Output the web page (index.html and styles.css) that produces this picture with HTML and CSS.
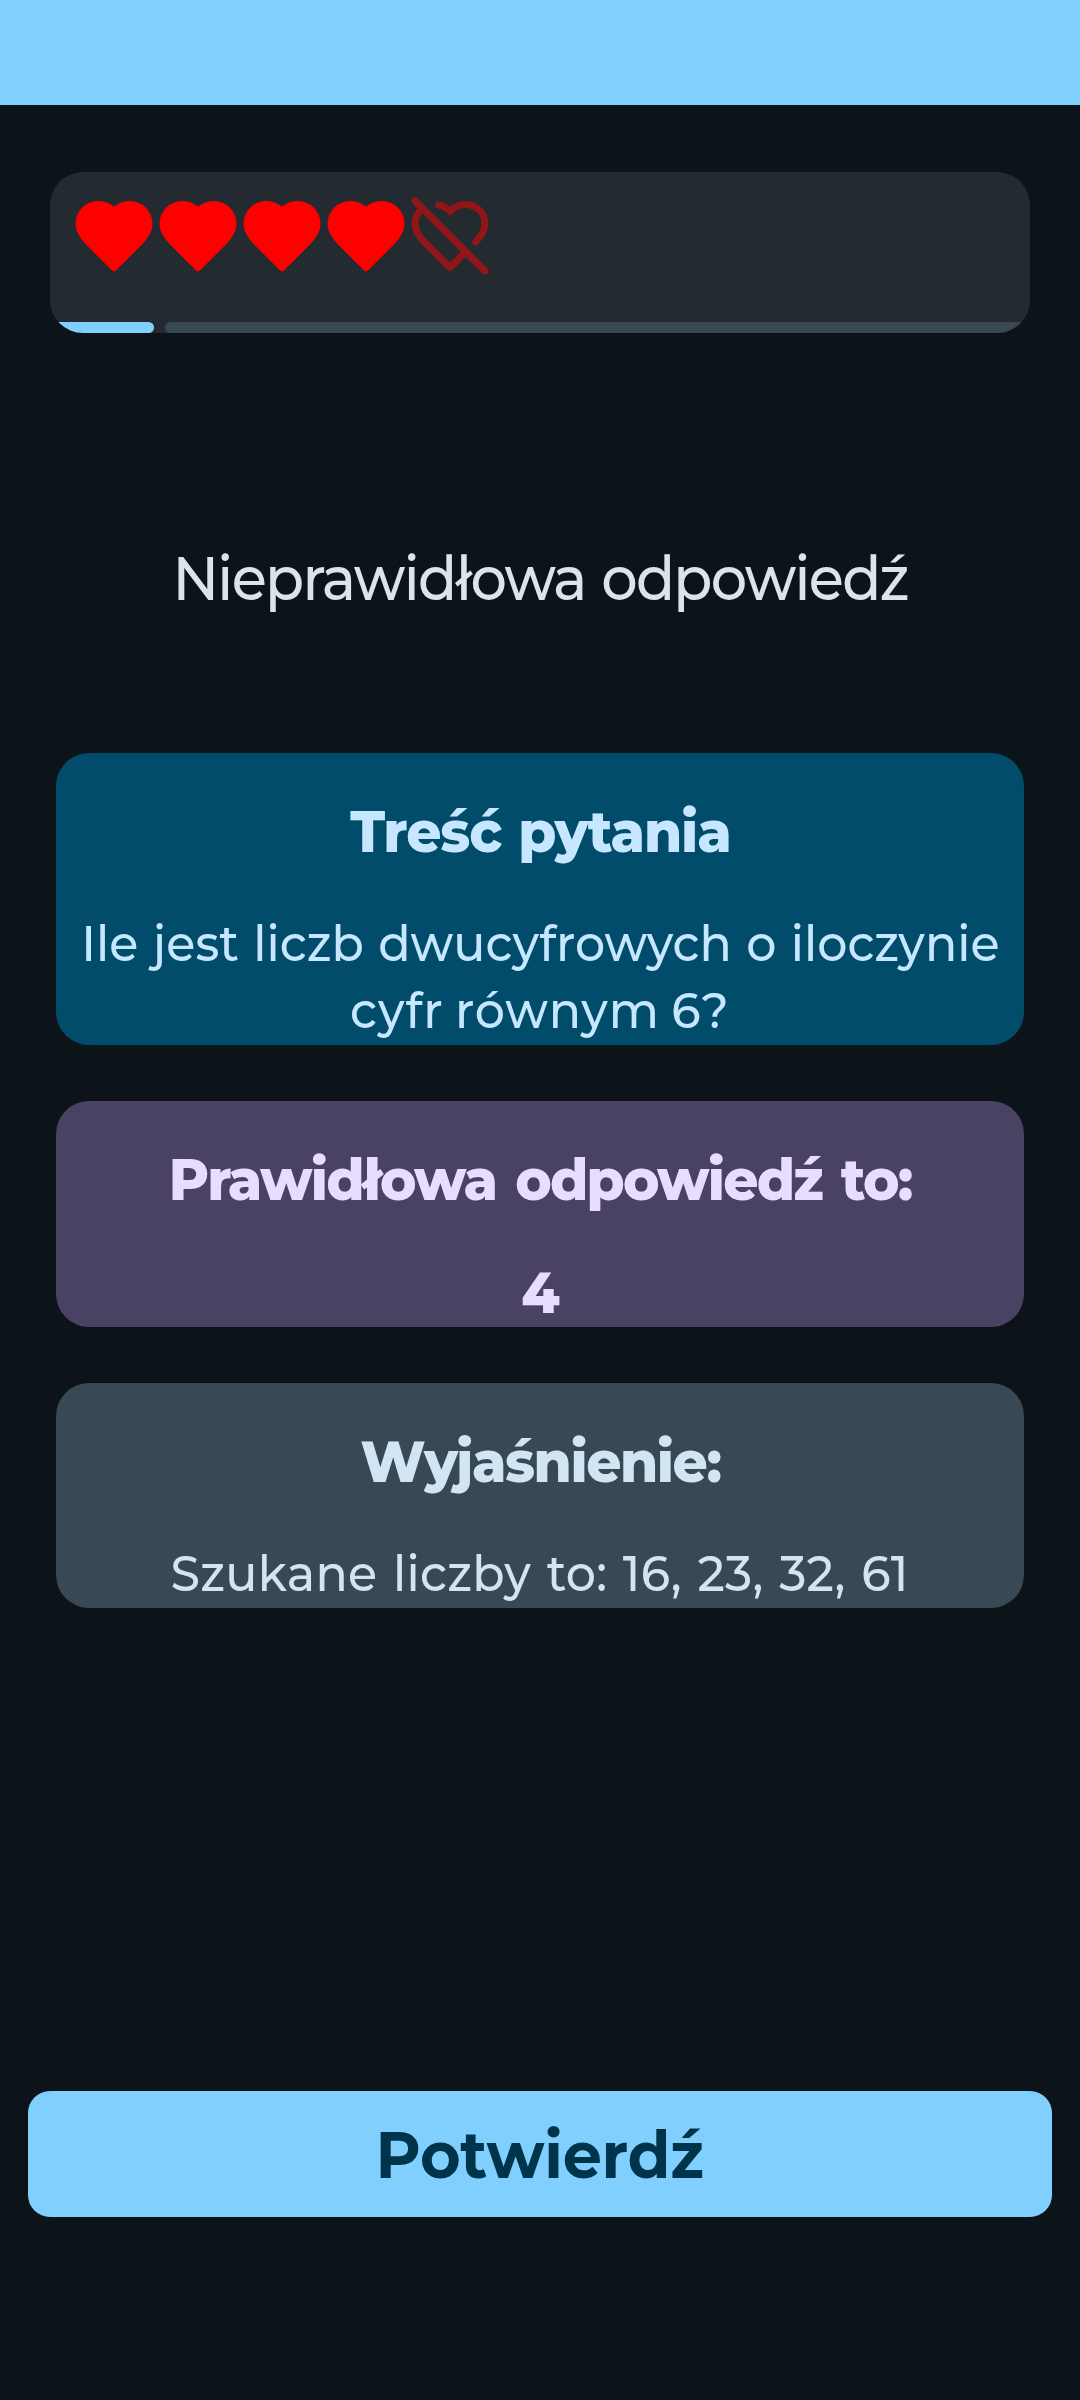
FILE: index.html
```html
<!DOCTYPE html>
<html lang="pl">
<head>
<meta charset="utf-8">
<title>Nieprawidłowa odpowiedź</title>
<link rel="stylesheet" href="styles.css">
</head>
<body>
<svg class="defs" aria-hidden="true">
  <symbol id="heart" viewBox="0 0 24 24"><path d="M19 14c1.49-1.46 3-3.21 3-5.5A5.5 5.5 0 0 0 16.5 3c-1.76 0-3 .5-4.5 2-1.5-1.5-2.74-2-4.5-2A5.5 5.5 0 0 0 2 8.5c0 2.3 1.5 4.05 3 5.5l7 7Z"/></symbol>
  <symbol id="heart-off" viewBox="0 0 24 24"><path d="M2 2 22 22M16.5 16.5 12 21l-7-7c-1.5-1.45-3-3.2-3-5.5a5.5 5.5 0 0 1 2.14-4.35M8.76 3.1c1.15.22 2.13.78 3.24 1.9 1.5-1.5 2.74-2 4.5-2A5.5 5.5 0 0 1 22 8.5c0 2.12-1.3 3.78-2.67 5.17"/></symbol>
</svg>
<div class="status-bar"></div>
<main class="screen">
  <section class="lives-card">
    <div class="lives">
      <svg class="life"><use href="#heart"/></svg>
      <svg class="life"><use href="#heart"/></svg>
      <svg class="life"><use href="#heart"/></svg>
      <svg class="life"><use href="#heart"/></svg>
      <svg class="life lost"><use href="#heart-off"/></svg>
    </div>
    <div class="progress"><div class="done"></div><div class="rest"></div></div>
  </section>
  <h1 class="title"><span class="label">Nieprawidłowa odpowiedź</span></h1>
  <section class="card question">
    <h2 class="heading"><span class="label">Treść pytania</span></h2>
    <p class="text"><span class="label">Ile jest liczb dwucyfrowych o iloczynie</span><span class="label last">cyfr równym 6?</span></p>
  </section>
  <section class="card answer">
    <h2 class="heading"><span class="label">Prawidłowa odpowiedź to:</span></h2>
    <p class="value"><span class="label">4</span></p>
  </section>
  <section class="card explanation">
    <h2 class="heading"><span class="label">Wyjaśnienie:</span></h2>
    <p class="text"><span class="label">Szukane liczby to: 16, 23, 32, 61</span></p>
  </section>
  <button class="confirm" type="button"><span class="label">Potwierdź</span></button>
</main>
</body>
</html>
```
FILE: styles.css
```css
* { box-sizing: border-box; }
body { margin: 0; background: #0c1319; font-family: Montserrat, Inter, sans-serif; height: 2400px; display: flex; flex-direction: column; }
h1, h2, p { margin: 0; }
.defs { display: none; }
.status-bar { height: 105px; background: #81cfff; flex: none; }
.screen { display: flex; flex-direction: column; flex: 1; padding: 67px 28px 183px; }

.lives-card { height: 161px; margin: 0 22px; padding-top: 22px; border-radius: 33px; background: #242b30; overflow: hidden; display: flex; flex-direction: column; justify-content: space-between; }
.lives { display: flex; padding-left: 22px; }
.life { width: 84px; height: 84px; fill: #f00; stroke: #f00; stroke-width: 2; stroke-linecap: round; stroke-linejoin: round; }
.lost { fill: none; stroke: #921518; }
.progress { display: flex; gap: 11px; height: 11px; }
.done { width: 104px; background: #81cfff; border-radius: 0 6px 6px 0; }
.rest { flex: 1; background: #384954; border-radius: 6px 0 0 6px; }

/* Slightly condensed lettering */
.label { display: block; width: max-content; margin: 0 auto; transform: scaleX(.94); }

.title { display: flex; justify-content: center; margin: 205px 0 135px; line-height: 80px; font-size: 61px; font-weight: 500; letter-spacing: -1.8px; word-spacing: 2px; color: #dde3ea; white-space: nowrap; }
.title .label { margin: 0; }

.card { margin: 0 28px 56px; padding-top: 42px; border-radius: 33px; white-space: nowrap; }
.heading { font-size: 58.4px; line-height: 72px; font-weight: 800; }
.text { display: flex; flex-direction: column; align-items: center; margin-top: 43px; font-size: 50.5px; line-height: 67px; font-weight: 500; }
.text .label { margin: 0; }
.value { margin-top: 43px; font-size: 58.4px; line-height: 68px; font-weight: 800; }

.question { height: 292px; background: #004c6a; color: #c6e7ff; }
.question .heading { letter-spacing: -1.16px; word-spacing: 2.3px; }
.question .text { letter-spacing: .05px; word-spacing: 1.6px; }
.question .last { letter-spacing: 1px; word-spacing: -2.5px; }
.answer { height: 226px; background: #4a4263; color: #e7deff; }
.answer .heading { letter-spacing: -1.85px; word-spacing: 5px; }
.explanation { height: 225px; background: #384954; color: #d2e5f4; }
.explanation .heading { letter-spacing: -1.5px; }
.explanation .text { letter-spacing: .3px; word-spacing: 2.8px; }

.confirm { margin-top: auto; height: 126px; padding: 0; border: 0; border-radius: 22px; background: #81cfff; color: #00344a; font: 700 66px Montserrat, Inter, sans-serif; letter-spacing: -.28px; }
```
